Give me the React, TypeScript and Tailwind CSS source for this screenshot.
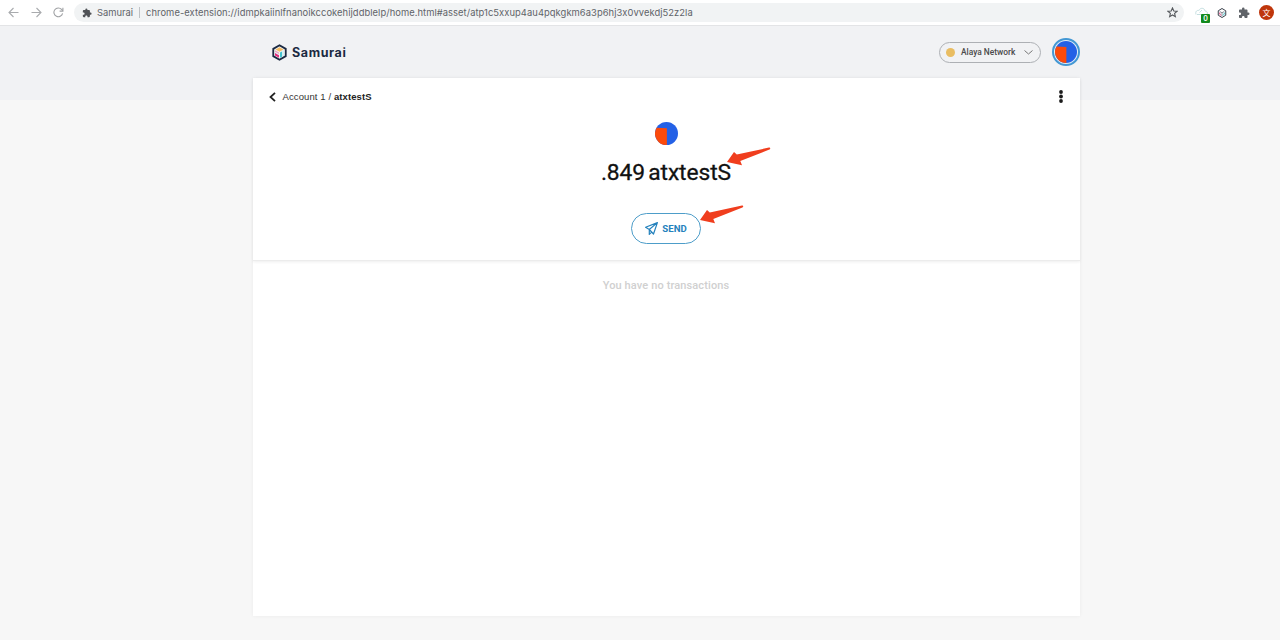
import React from 'react';
import { MdExtension } from 'react-icons/md';

function BrowserBar() {
  return (
    <div className="flex h-[26px] items-center border-b border-[#e3e4e6] bg-white text-[#5f6368]">
      <svg className="ml-2 h-[11px] w-[11px] shrink-0" viewBox="0 0 11 11" fill="none" stroke="#a9abae" strokeWidth="1.1">
        <path d="M10.5 5.5H1M5.5 1 1 5.5 5.5 10" />
      </svg>
      <svg className="ml-3 h-[11px] w-[11px] shrink-0" viewBox="0 0 11 11" fill="none" stroke="#a9abae" strokeWidth="1.1">
        <path d="M.5 5.5H10M5.5 1 10 5.5 5.5 10" />
      </svg>
      <svg className="ml-[11px] h-[11px] w-[11px] shrink-0" viewBox="0 0 11 11" fill="none" stroke="#a0a2a5" strokeWidth="1.1">
        <path d="M9.6 6.4A4.4 4.4 0 1 1 8.6 2.4L9.8 3.7" />
        <path d="M9.9.8v3.3H6.6" />
      </svg>
      <div className="ml-[10px] flex h-[19px] w-[1110px] shrink-0 items-center rounded-full bg-[#f1f3f4] pr-[6px] pl-[8px] font-[Inter,sans-serif] text-[9.4px] leading-none">
        <MdExtension className="h-[10px] w-[10px] shrink-0 text-[#505357]" />
        <span className="ml-[5px] w-[37px] shrink-0 whitespace-nowrap">Samurai</span>
        <span className="ml-[5px] h-[11px] w-px shrink-0 bg-[#bfc2c5]" />
        <span className="ml-[6px] tracking-[0.055px] whitespace-nowrap">
          chrome-extension://idmpkaiinlfnanoikccokehijddblelp/home.html#asset/atp1c5xxup4au4pqkgkm6a3p6hj3x0vvekdj52z2la
        </span>
        <svg className="ml-auto h-[11px] w-[11px] shrink-0" viewBox="0 0 24 24" fill="none" stroke="#55585c" strokeWidth="2.4">
          <path d="m12 2 2.9 6.6 7.1.7-5.400 4.700 1.600 7L12 17.300 5.800 21l1.600-7L2 9.300l7.100-.7z" />
        </svg>
      </div>
      <div className="relative ml-[11px] h-[16px] w-[16px] shrink-0">
        <svg className="h-[14px] w-[14px]" viewBox="0 0 14 14" fill="none" stroke="#c4dfe0" strokeWidth="1">
          <path d="M1 9.500C0 6 2.500 5 4 5.500 5 2.500 9.500 2.500 10 6c2 0 3 1.500 2 3.500M2 9.500h7M4.500 7.500 7 5" />
        </svg>
        <span className="absolute top-[9px] left-[6px] flex h-[9px] w-[9px] items-center justify-center rounded-[1px] bg-[#128a1c] font-[Inter,sans-serif] text-[7px] leading-none font-semibold text-white">0</span>
      </div>
      <svg className="ml-[6px] h-[10px] w-[10px] shrink-0" viewBox="0 0 18 20" fill="none" strokeWidth="2">
        <path d="m9 1 7.500 4.500v9L9 19l-7.500-4.500v-9z" stroke="#3a404b" />
        <path d="m4.500 7 4.500 2.500L13.500 7M9 9.500V15" stroke="#8a8f96" />
        <path d="M4.500 9v3.500L8 15" stroke="#d94883" />
        <path d="M13.500 9v3.500L10 15" stroke="#4fbfc6" />
      </svg>
      <MdExtension className="ml-[11px] h-[12px] w-[12px] shrink-0 text-[#5f6368]" />
      <span className="ml-[9px] flex h-[15px] w-[15px] shrink-0 items-center justify-center rounded-full bg-[#bf360c] font-['Noto_Sans_CJK_SC',sans-serif] text-[8px] leading-none text-white">文</span>
    </div>
  );
}

function Logo() {
  return (
    <svg className="h-[17px] w-[15px]" viewBox="0 0 30 34" fill="none">
      <path d="m15 2.500 12.500 7.200v14.600L15 31.500 2.500 24.300V9.700z" stroke="#1c2a42" strokeWidth="3.600" />
      <path d="m15 6.500 8 4.500-8 4.500L7 11z" fill="#f5bd62" />
      <path d="m6 12.500 8 4.500v10.500l-8-4.500z" fill="#e3f4f6" />
      <path d="m6 12.500 8 4.500v3l-8-4.500z" fill="#f3a0bf" />
      <path d="m6 18 8 4.500v5L6 23z" fill="#e62b7b" />
      <path d="m24 12.500-8 4.500v10.500l8-4.500z" fill="#d5f0f2" />
      <path d="m20 15-4 2.200v10.300l4-2.200z" fill="#43c3cf" />
    </svg>
  );
}

function Identicon({ className }: { className: string }) {
  return (
    <svg className={className} viewBox="0 0 24 24">
      <circle cx="12" cy="12" r="12" fill="#2461e6" />
      <path d="M12.400 24A12 12 0 0 1 1.700 6L12.400 6.500z" fill="#fb4a0b" />
    </svg>
  );
}

function Pointer({ className }: { className: string }) {
  return (
    <svg className={className} viewBox="0 0 44 20" fill="#f03e1e">
      <path d="M0 15 7 5 9.800 7.500 42 .6c1.600-.3 1.600 1.500.4 2L13.300 13.900l1.700 4.300z" />
    </svg>
  );
}

export default function App() {
  return (
    <div className="h-[640px] overflow-hidden bg-[#f7f7f7] font-[Roboto,sans-serif] text-black">
      <BrowserBar />
      <header className="h-[74px] bg-[#f1f2f4]">
        <div className="ml-[252px] flex h-[52px] w-[828px] items-center pl-[20px]">
          <Logo />
          <span className="mt-[2px] ml-[5px] font-[Inter,sans-serif] text-[12.500px] leading-none font-bold tracking-[0.600px] text-[#1c2a42]">Samurai</span>
          <div className="mr-[11px] ml-auto flex h-[21px] w-[102px] items-center rounded-full border border-[#adb0b4] pr-[7px] pl-[6px]">
            <span className="h-[9px] w-[9px] rounded-full bg-[#e9bd62]" />
            <span className="ml-[6px] text-[8.400px] leading-none font-medium whitespace-nowrap text-[#4a4a4a]">Alaya Network</span>
            <svg className="ml-auto h-[5px] w-[9px]" viewBox="0 0 9 5" fill="none" stroke="#777" strokeWidth="1">
              <path d="m.5.5 4 3.500 4-3.500" />
            </svg>
          </div>
          <div className="flex h-[28px] w-[28px] items-center justify-center rounded-full border-2 border-[#4398d4] bg-[#e4eef6]">
            <Identicon className="h-[22px] w-[22px]" />
          </div>
        </div>
      </header>

      <main className="-mt-[22px] ml-[252.500px] h-[538px] w-[827px] bg-white shadow-[0_0_4px_rgba(0,0,0,0.05)]">
        <section className="h-[183px] border-b border-[#ececec] shadow-[0_1px_3px_rgba(0,0,0,0.07)]">
          <div className="flex h-[38px] items-center pr-[17px] pl-[16px]">
            <svg className="h-[10px] w-[7px]" viewBox="0 0 7 10" fill="none" stroke="#222" strokeWidth="1.800">
              <path d="M6 .8 1.500 5 6 9.200" />
            </svg>
            <p className="ml-[7px] font-['Liberation_Sans',sans-serif] text-[9.500px] leading-none tracking-[0.100px] whitespace-nowrap text-[#333]">
              Account 1 / <b className="text-[#222]">atxtestS</b>
            </p>
            <svg className="mb-[2px] ml-auto h-[13px] w-[4px]" viewBox="0 0 4 13" fill="#1b1b1b">
              <circle cx="2" cy="2" r="1.900" />
              <circle cx="2" cy="6.500" r="1.900" />
              <circle cx="2" cy="11" r="1.900" />
            </svg>
          </div>
          <div className="flex flex-col items-center pt-[6px]">
            <Identicon className="h-[23px] w-[23px]" />
            <div className="relative mt-[15px]">
              <h1 className="text-[22.800px] leading-[25px] font-normal tracking-[-0.070px] whitespace-nowrap text-[#111] [-webkit-text-stroke:0.3px_#111] [word-spacing:-2.500px]">.849 atxtestS</h1>
              <Pointer className="absolute top-[-13px] left-[126px] h-[20px] w-[44px]" />
            </div>
            <div className="relative mt-[28px]">
              <button className="flex h-[31px] w-[70px] items-center justify-center rounded-full border border-[#4d9dc9] bg-white text-[#2582bd]">
                <svg className="h-[13px] w-[13px]" viewBox="0 0 13 13" fill="none" stroke="currentColor" strokeWidth="1.200" strokeLinejoin="round">
                  <path d="M12.400.6.6 5.300l3.700 2.200L8.500 12zM12.400.6 4.300 7.500v4.900l2.300-2.300" />
                </svg>
                <span className="ml-[4px] text-[9.600px] leading-none font-bold">SEND</span>
              </button>
              <Pointer className="absolute top-[-8px] left-[69px] h-[20px] w-[44px]" />
            </div>
          </div>
        </section>
        <p className="mt-[18px] text-center text-[11px] leading-[13px] font-medium tracking-[0.120px] text-[#d0d0d0]">You have no transactions</p>
      </main>
    </div>
  );
}
